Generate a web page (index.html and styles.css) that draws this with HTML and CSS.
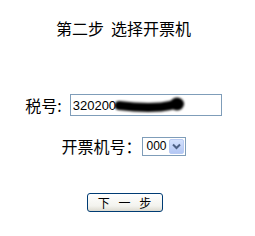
FILE: index.html
```html
<!DOCTYPE html>
<html lang="zh-CN">
<head>
  <meta charset="UTF-8">
  <title>选择开票机</title>
  <link rel="stylesheet" href="styles.css">
</head>
<body>
  <div class="page">
    <div class="title">第二步&nbsp;&nbsp;选择开票机</div>

    <div class="row row-tax">
      <span class="label">税号:</span>
      <div class="tax-input">
        <span class="tax-value">320200</span>
        <svg class="scribble" width="72" height="22" viewBox="0 0 72 22">
          <defs>
            <filter id="soft" filterUnits="userSpaceOnUse" x="0" y="0" width="72" height="22">
              <feGaussianBlur stdDeviation="0.9"/>
            </filter>
          </defs>
          <g filter="url(#soft)">
            <path d="M4 11.5 C 16 13, 32 14, 46 13 C 53 12.5, 58 11, 62 9.5" fill="none" stroke="#000" stroke-width="9" stroke-linecap="round"/>
            <ellipse cx="62" cy="10" rx="7" ry="6.5" fill="#000"/>
          </g>
        </svg>
      </div>
    </div>

    <div class="row row-machine">
      <span class="label">开票机号：</span>
      <div class="xp-select">
        <span class="xp-select-value">000</span>
        <span class="xp-select-arrow">
          <svg width="9" height="7" viewBox="0 0 9 7">
            <path d="M1 1.5 L4.5 5 L8 1.5" fill="none" stroke="#4d6185" stroke-width="2"/>
          </svg>
        </span>
      </div>
    </div>

    <div class="row row-button">
      <button class="xp-button">下 一 步</button>
    </div>
  </div>
</body>
</html>
```

FILE: styles.css
```css
body {
  margin: 0;
  background: #ffffff;
  font-family: "Noto Sans CJK SC", "DejaVu Sans", sans-serif;
  color: #000000;
}

.page {
  width: 247px;
  padding-top: 18px;
}

.title {
  text-align: center;
  font-size: 16px;
  line-height: 20px;
  height: 20px;
}

.row {
  display: flex;
  justify-content: center;
  align-items: center;
}

.label {
  font-size: 16px;
  line-height: 20px;
}

.row-tax {
  margin-top: 56px;
}

.row-tax .label {
  margin-right: 8px;
}

.tax-input {
  position: relative;
  box-sizing: border-box;
  width: 152px;
  height: 22px;
  border: 1px solid #7f9db9;
  display: flex;
  align-items: center;
  padding-left: 2px;
}

.tax-value {
  font-family: "Liberation Sans", Arial, sans-serif;
  font-size: 13px;
}

.scribble {
  position: absolute;
  left: 44px;
  top: -1px;
}

.row-machine {
  margin-top: 20px;
}

.xp-select {
  box-sizing: border-box;
  width: 44px;
  height: 19px;
  border: 1px solid #7f9db9;
  display: flex;
  align-items: center;
  justify-content: space-between;
  padding: 1px;
}

.xp-select-value {
  font-family: "Liberation Sans", Arial, sans-serif;
  font-size: 12px;
  padding-left: 3px;
}

.xp-select-arrow {
  box-sizing: border-box;
  width: 15px;
  height: 15px;
  border: 1px solid #b9cbf3;
  border-radius: 2px;
  background: linear-gradient(#d4e1fd, #b3c7f4);
  display: flex;
  align-items: center;
  justify-content: center;
}

.row-button {
  margin-top: 37px;
  padding-left: 2px;
}

.xp-button {
  box-sizing: border-box;
  width: 76px;
  height: 19px;
  padding: 0;
  border: 1px solid #003c74;
  border-radius: 3px;
  background: linear-gradient(#ffffff, #f3f3ee 70%, #dcdad0);
  font-family: "Noto Sans CJK SC", sans-serif;
  font-size: 12px;
  line-height: 15px;
  word-spacing: 6px;
  color: #000000;
}
```
